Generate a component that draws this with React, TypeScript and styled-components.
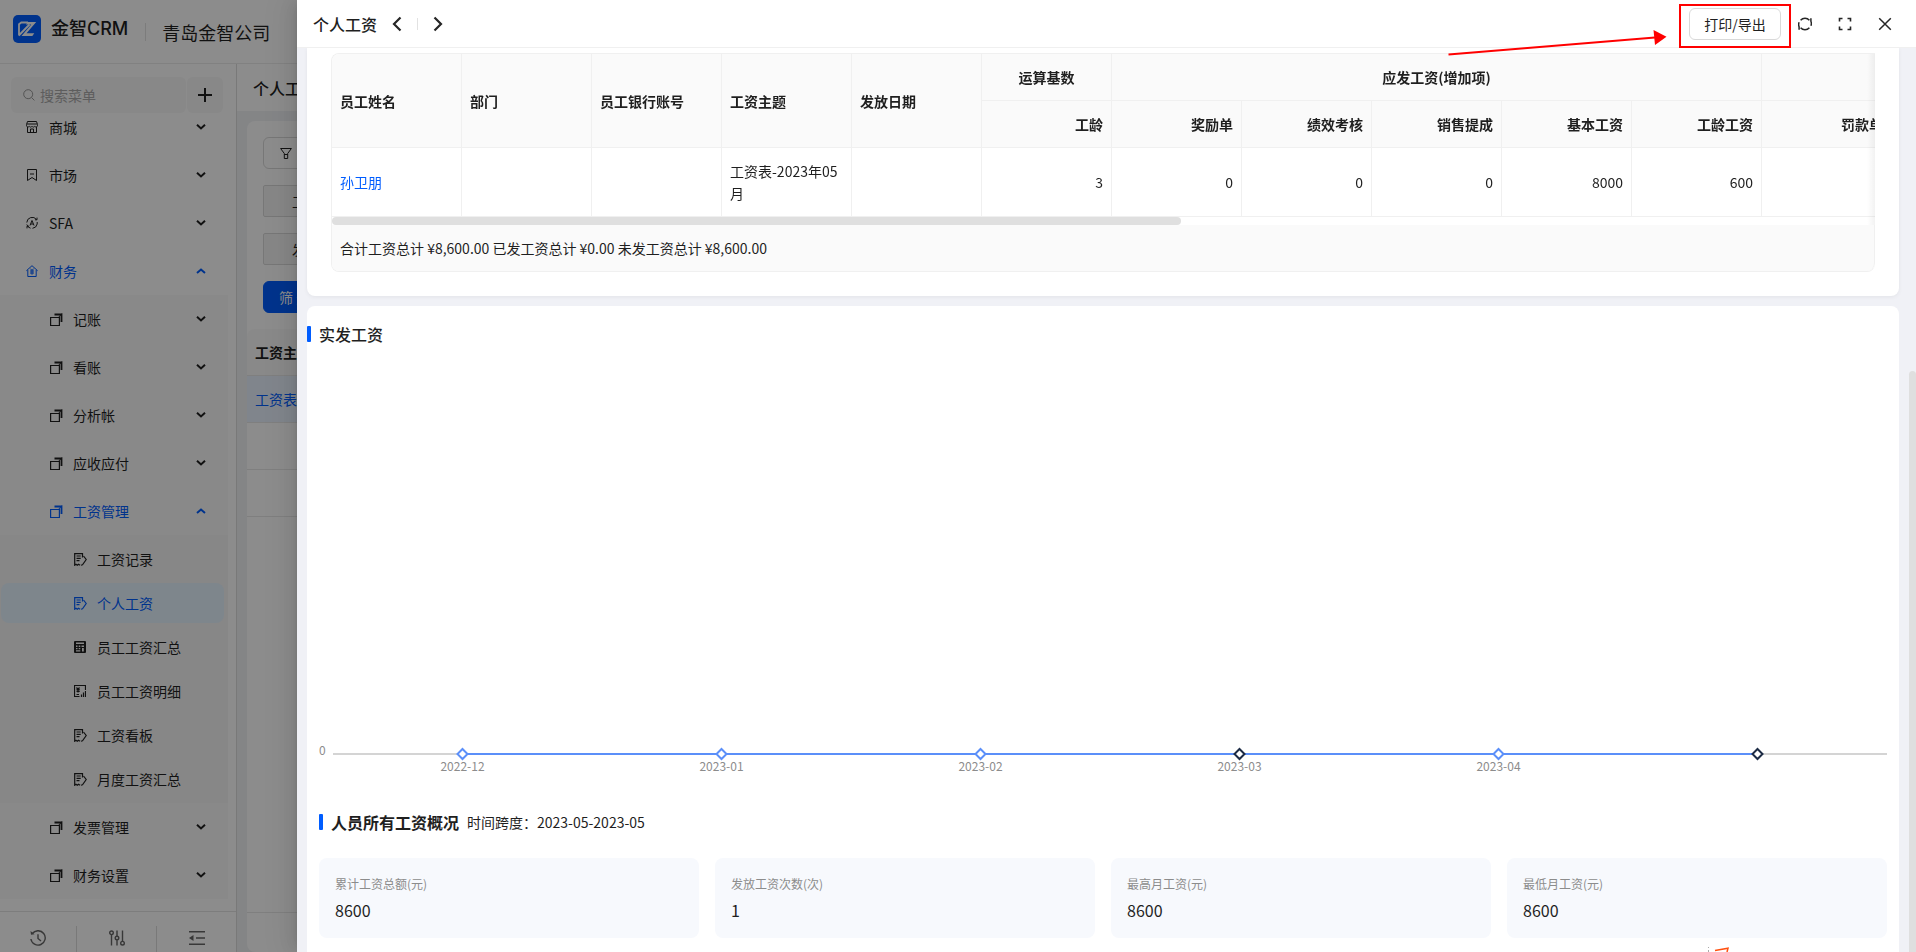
import React from 'react';
import styled, { createGlobalStyle, css } from 'styled-components';

const PRIMARY = '#005dff';
const LINE = '#f0f0f0';
const INK = '#1f1f1f';

const GlobalStyle = createGlobalStyle`
  *, *::before, *::after { box-sizing: border-box; }
  html, body, #root { height: 100%; }
  body {
    margin: 0;
    overflow: hidden;
    font-family: "Noto Sans CJK SC", "Liberation Sans", sans-serif;
    font-size: 14px;
    line-height: 22px;
    color: ${INK};
    background: #f0f2f5;
  }
  button, input { font: inherit; color: inherit; }
  button { cursor: pointer; }
  a { color: inherit; text-decoration: none; }
  h1, h2, ul, dl, dd, p { margin: 0; padding: 0; }
  ul { list-style: none; }
  svg { display: block; flex: none; }
`;

/* ---------- icons ---------- */

const Stroke = styled.svg.attrs({ fill: 'none', stroke: 'currentColor' })``;

const ShopIcon = () => (
  <Stroke width="12" height="12" viewBox="0 0 12 12">
    <path d="M1.5 .5h9l1 3v1.2a1.5 1.5 0 0 1-2.7 .6a1.6 1.6 0 0 1-2.8 0a1.6 1.6 0 0 1-2.8 0a1.5 1.5 0 0 1-2.7-.6V3.500zM1.500 6v5.500h9V6M4.500 11.500v-3.500h3v3.500M1 3h10" />
  </Stroke>
);
const MarketIcon = () => (
  <Stroke width="12" height="12" viewBox="0 0 12 12">
    <path d="M1.500 .5h9v11l-4.500-3l-4.500 3zM4 5h4" />
  </Stroke>
);
const SfaIcon = () => (
  <Stroke width="12" height="12" viewBox="0 0 12 12">
    <path d="M10.500 2.500A5.400 5.400 0 0 0 .8 5.500M.8 7.500a5.400 5.400 0 0 0 3.700 3.700M11.200 5v2a5.400 5.400 0 0 1-4.700 4.300M11 .6v2.200H9M1 11.400V9.200h2M4 8.500l2-5l2 5M4.800 7h2.400" />
  </Stroke>
);
const FinanceIcon = () => (
  <Stroke width="12" height="12" viewBox="0 0 12 12">
    <path d="M.4 5.700L6 .7l5.600 5M1.800 5v6.500h8.400V5M4.300 3.600L6 5.400l1.700-1.800M4 6h4M4 8h4M6 5.400v4.300" />
  </Stroke>
);
const StackIcon = () => (
  <Stroke width="13" height="13" viewBox="0 0 13 13">
    <path d="M.6 4.500h8.800v8H.6z" strokeWidth="1.200" />
    <path d="M4.500 1.500h7v7.500" strokeWidth="1.800" />
    <path d="M11.800 .5L8.500 4.500" strokeWidth="1" />
  </Stroke>
);
const NoteIcon = () => (
  <Stroke width="13" height="13" viewBox="0 0 13 13" strokeWidth="1.200">
    <path d="M8.500 4.500V.6H.7v11.600l1.300-.9l1.300 .9l1.300-.9l1.400 .9M2.500 3h4.200M2.500 5.300h4.200M2.500 7.600h3" />
    <path d="M9.500 3l2.700 3.500l-3.700 5.300l-1.600 .5" />
  </Stroke>
);
const CalcIcon = () => (
  <svg width="12" height="12" viewBox="0 0 12 12" fill="currentColor">
    <path fillRule="evenodd" d="M1 0h10a1 1 0 0 1 1 1v10a1 1 0 0 1-1 1H1a1 1 0 0 1-1-1V1a1 1 0 0 1 1-1zM2 1.500v1.500h8V1.500zM2 4.500V6h1.500V4.500zM4.700 4.500V6h1.600V4.500zM7.500 4.500V6H10V4.500zM2 7v1.300h1.500V7zM4.700 7v1.300h1.600V7zM2 9.300v1.200h4.300V9.300zM8 7v3.500h1.800V7z" />
  </svg>
);
const ReportIcon = () => (
  <Stroke width="12" height="12" viewBox="0 0 12 12" strokeWidth="1.200">
    <path d="M11.500 5V.5h-11v11h5M2.500 2.500L4 4.300l1.500-1.800M2.500 4.700h3.200M2.500 6.300h3.200M4 4.300v3.200M2.500 9.500h2.500M7.500 9.500v2.500M9.500 7.500V12M11.500 6v6" />
  </Stroke>
);
const Chevron = ({ up }: { up?: boolean }) => (
  <Stroke width="10" height="6" viewBox="0 0 10 6" strokeWidth="2">
    <path d={up ? 'M1 5l4-3.500L9 5' : 'M1 .8l4 3.700L9 .8'} />
  </Stroke>
);
const SearchIcon = () => (
  <Stroke width="12" height="12" viewBox="0 0 12 12">
    <circle cx="5.200" cy="5.200" r="4.500" />
    <path d="M8.500 8.500l2.900 2.900" />
  </Stroke>
);
const PlusIcon = () => (
  <Stroke width="14" height="14" viewBox="0 0 14 14" strokeWidth="2">
    <path d="M7 0v14M0 7h14" />
  </Stroke>
);
const FunnelIcon = () => (
  <Stroke width="12" height="12" viewBox="0 0 12 12">
    <path d="M.6 1.500h10.800L7.700 6.500v5H4.300v-5zM4.300 7.500h3.400" />
  </Stroke>
);
const HistoryIcon = () => (
  <Stroke width="16" height="16" viewBox="0 0 16 16" strokeWidth="1.400">
    <path d="M2.300 3.500A7.200 7.200 0 1 1 .9 9M8 4.200v4.300l3 2.500" />
    <path d="M.5 1l.5 3.800l3.600-.6z" fill="currentColor" stroke="none" />
  </Stroke>
);
const SlidersIcon = () => (
  <Stroke width="16" height="16" viewBox="0 0 16 16" strokeWidth="1.400">
    <path d="M2.500 5v10.500M8 .5V6M8 10v5.500M13.500 .5V11" />
    <circle cx="2.500" cy="2.800" r="1.800" />
    <circle cx="8" cy="8" r="1.800" />
    <circle cx="13.500" cy="13.200" r="1.800" />
  </Stroke>
);
const FoldIcon = () => (
  <Stroke width="16" height="16" viewBox="0 0 16 16" strokeWidth="1.600">
    <path d="M0 1.800h16M7 8h9M0 14.200h16" />
    <path d="M0 8l4.500-3v6z" fill="currentColor" stroke="none" />
  </Stroke>
);
const ArrowIcon = ({ next }: { next?: boolean }) => (
  <Stroke width="10" height="16" viewBox="0 0 10 16" strokeWidth="2.200">
    <path d={next ? 'M1.500 1.500L8 8l-6.500 6.500' : 'M8.500 1.500L2 8l6.500 6.500'} />
  </Stroke>
);
const RefreshIcon = () => (
  <Stroke width="14" height="14" viewBox="0 0 14 14" strokeWidth="1.500">
    <path d="M2.600 3.200A5.900 5.900 0 0 1 11.400 3.200M11.400 10.800A5.900 5.900 0 0 1 2.600 10.800" />
    <path d="M12.900 1.200V4.200A6 6 0 0 1 12.900 8.800M1.100 12.800V9.800A6 6 0 0 1 1.100 5.200" />
  </Stroke>
);
const FullscreenIcon = () => (
  <Stroke width="14" height="14" viewBox="0 0 14 14" strokeWidth="1.600">
    <path d="M1.500 4.500v-3h3M9.500 1.500h3v3M12.500 9.500v3h-3M4.500 12.500h-3v-3" />
  </Stroke>
);
const CloseIcon = () => (
  <Stroke width="14" height="14" viewBox="0 0 14 14" strokeWidth="1.500">
    <path d="M1.200 1.200l11.600 11.600M12.800 1.200L1.200 12.800" />
  </Stroke>
);
const Logo = () => (
  <svg width="28" height="28" viewBox="0 0 28 28">
    <rect width="28" height="28" rx="5" fill={PRIMARY} />
    <path d="M6 20.500V9.300L8.300 7.500H15M5.800 20.500L16.500 9.500" fill="none" stroke="#fff" strokeWidth="1.800" />
    <path d="M15 7h8.200L13.500 18.200h7.800l-2 2.800H8.500L18.300 9.500h-5.500z" fill="#fff" />
  </svg>
);

/* ---------- page behind the drawer ---------- */

const Page = styled.div`
  display: flex;
  flex-direction: column;
  height: 100vh;
`;
const TopBar = styled.header`
  display: flex;
  align-items: center;
  flex: none;
  height: 64px;
  padding-left: 13px;
  background: #fff;
  border-bottom: 1px solid #ececec;
`;
const LogoBox = styled.div`
  margin-bottom: 6px;
`;
const Brand = styled.strong`
  margin: 0 17px 6px 10px;
  font-family: Inter, "Noto Sans CJK SC", sans-serif;
  font-size: 18px;
  font-weight: 500;
  line-height: 28px;
`;
const BarDivider = styled.span<{ $h: number }>`
  width: 1px;
  height: ${(p) => p.$h}px;
  background: #e2e2e2;
`;
const Company = styled.span`
  margin-left: 16px;
  font-size: 18px;
  line-height: 28px;
`;
const Columns = styled.div`
  display: flex;
  flex: 1;
  min-height: 0;
`;

const Sidebar = styled.aside`
  display: flex;
  flex-direction: column;
  flex: none;
  width: 237px;
  background: #fff;
  border-right: 1px solid #dcdcdc;
`;
const SearchRow = styled.div`
  display: flex;
  flex: none;
  gap: 1px;
  padding: 13px 13px 0 11px;
`;
const SearchLabel = styled.label`
  display: flex;
  align-items: center;
  flex: 1;
  gap: 5px;
  min-width: 0;
  height: 36px;
  padding: 0 12px;
  background: #f7f7f7;
  border-radius: 6px;
  color: #999;
`;
const SearchInput = styled.input.attrs({ type: 'search' })`
  flex: 1;
  min-width: 0;
  padding: 0;
  border: 0;
  outline: 0;
  background: none;
  &::placeholder { color: #aaa; opacity: 1; }
`;
const AddButton = styled.button`
  display: grid;
  place-items: center;
  width: 36px;
  height: 36px;
  padding: 0;
  border: 0;
  border-radius: 6px;
  background: #f7f7f7;
`;
const MenuScroll = styled.nav`
  flex: 1;
  min-height: 0;
  padding-right: 8px;
  overflow: hidden;
`;
const MenuList = styled.ul<{ $scrolled?: boolean; $shade?: string }>`
  margin-top: ${(p) => (p.$scrolled ? '-10px' : '0')};
  background: ${(p) => p.$shade ?? 'transparent'};
`;
const LeafList = styled(MenuList)`
  padding: 4px 4px 4px 1px;
  display: flex;
  flex-direction: column;
  gap: 4px;
`;
const MenuRow = styled.button<{ $level: number; $open?: boolean }>`
  display: flex;
  align-items: center;
  width: 100%;
  height: 48px;
  padding: 0 22px 0 ${(p) => 2 + p.$level * 24}px;
  gap: 10px;
  border: 0;
  background: none;
  text-align: left;
  color: ${(p) => (p.$open ? PRIMARY : INK)};
`;
const IconSlot = styled.span`
  display: flex;
  width: 13px;
`;
const RowLabel = styled.span`
  flex: 1;
`;
const Leaf = styled.a<{ $active?: boolean }>`
  display: flex;
  align-items: center;
  gap: 10px;
  height: 40px;
  padding-left: 73px;
  border-radius: 8px;
  ${(p) => p.$active && css`
    color: ${PRIMARY};
    background: #e6f4ff;
  `}
`;
const SideFooter = styled.div`
  display: grid;
  grid-template-columns: 76px 1fr 1fr;
  flex: none;
  height: 41px;
  border-top: 1px solid #e4e4e4;
`;
const FooterButton = styled.button`
  display: flex;
  justify-content: center;
  margin-top: 14px;
  padding: 4px 0 0;
  border: 0;
  background: none;
  color: #666;
  & + & { border-left: 1px solid #dcdcdc; }
`;

const Main = styled.main`
  display: flex;
  flex-direction: column;
  flex: 1;
  min-width: 0;
`;
const PageTitle = styled.h1`
  flex: none;
  height: 47px;
  padding: 12px 16px;
  background: #fff;
  font-size: 16px;
  font-weight: 500;
  line-height: 24px;
`;
const ListCard = styled.section`
  display: flex;
  flex-direction: column;
  flex: 1;
  margin: 10px 10px 0;
  background: #fff;
  border-radius: 8px;
`;
const Filters = styled.div`
  display: flex;
  flex-direction: column;
  align-items: flex-start;
  gap: 16px;
  padding: 16px;
`;
const FilterButton = styled.button<{ $kind: 'outline' | 'field' | 'primary' }>`
  height: 32px;
  border: 1px solid #d9d9d9;
  background: #fff;
  border-radius: 6px;
  padding: 0 16px;
  ${(p) => p.$kind === 'field' && css`
    padding: 0 28px;
    border-radius: 2px;
    background: #f5f5f5;
  `}
  ${(p) => p.$kind === 'primary' && css`
    padding: 0 15px;
    color: #fff;
    border-color: ${PRIMARY};
    background: ${PRIMARY};
  `}
`;
const ListTable = styled.table`
  width: 100%;
  border-collapse: separate;
  border-spacing: 0;
  th, td {
    height: 47px;
    padding: 0 8px;
    text-align: left;
    border-bottom: 1px solid #e8e8e8;
  }
  th { background: #fafafa; font-weight: 600; border-radius: 8px 0 0 0; }
`;
const PickedRow = styled.tr`
  background: #eaf3ff;
  color: ${PRIMARY};
`;
const ListFooter = styled.div`
  height: 40px;
  margin-top: auto;
  border-top: 1px solid #e8e8e8;
`;

const Mask = styled.div`
  position: fixed;
  inset: 0;
  background: rgba(0, 0, 0, 0.45);
`;

/* ---------- drawer ---------- */

const Drawer = styled.section`
  position: fixed;
  inset: 0 0 0 297px;
  display: flex;
  flex-direction: column;
  background: #f0f1f6;
  box-shadow: -6px 0 16px rgba(0, 0, 0, 0.08), -3px 0 6px -4px rgba(0, 0, 0, 0.12),
    -9px 0 28px 8px rgba(0, 0, 0, 0.05);
`;
const DrawerHead = styled.header`
  position: relative;
  z-index: 1;
  display: flex;
  align-items: center;
  flex: none;
  gap: 8px;
  height: 48px;
  padding: 0 15px 0 16px;
  background: #fff;
  border-bottom: 1px solid ${LINE};
`;
const DrawerTitle = styled.h2`
  font-size: 16px;
  font-weight: 500;
  line-height: 24px;
`;
const Pager = styled.div`
  display: flex;
  align-items: center;
  flex: 1;
  gap: 4px;
  margin-left: -4px;
`;
const IconButton = styled.button`
  display: grid;
  place-items: center;
  width: 32px;
  height: 32px;
  padding: 0;
  border: 0;
  background: none;
  color: #262626;
`;
const ExportWrap = styled.div`
  position: relative;
  &::after {
    content: '';
    position: absolute;
    inset: -4px -10px -8px -10px;
    border: 2px solid #f00;
    pointer-events: none;
  }
`;
const ExportButton = styled.button`
  height: 32px;
  width: 92px;
  padding: 0;
  background: #fff;
  border: 1px solid #d9d9d9;
  border-radius: 6px;
`;
const Pointer = styled.svg`
  position: absolute;
  right: calc(100% + 22px);
  top: 21px;
`;

const DrawerBody = styled.div`
  display: flex;
  flex: 1;
  min-height: 0;
`;
const Cards = styled.div`
  display: flex;
  flex-direction: column;
  flex: 1;
  gap: 10px;
  min-width: 0;
  padding: 0 10px;
  overflow: hidden;
`;
const Rail = styled.div`
  width: 7px;
  padding-top: 323px;
  display: flex;
`;
const RailThumb = styled.span`
  flex: 1;
  border-radius: 6px 6px 0 0;
  background: #dfdfdf;
`;
const TableCard = styled.section`
  padding: 5px 24px 24px;
  background: #fff;
  border-radius: 0 0 8px 8px;
  box-shadow: 0 1px 4px rgba(0, 0, 0, 0.06);
`;
const TableFrame = styled.div`
  border: 1px solid ${LINE};
  border-right: 0;
  border-radius: 8px 0 8px 8px;
  overflow: hidden;
`;
const TableView = styled.div`
  position: relative;
  overflow: hidden;
  &::after {
    content: '';
    position: absolute;
    inset: 0 0 0 auto;
    width: 8px;
    background: linear-gradient(to right, transparent, rgba(5, 5, 5, 0.05));
  }
`;
const PayTable = styled.table`
  width: 1560px;
  table-layout: fixed;
  border-collapse: separate;
  border-spacing: 0;
`;
const Th = styled.th<{ $align?: string }>`
  height: 47px;
  padding: 12px 8px;
  font-weight: 600;
  text-align: ${(p) => p.$align ?? 'left'};
  background: #fafafa;
  border-right: 1px solid ${LINE};
  border-bottom: 1px solid ${LINE};
`;
const Td = styled.td<{ $num?: boolean }>`
  height: 69px;
  padding: 12px 8px;
  text-align: ${(p) => (p.$num ? 'right' : 'left')};
  border-right: 1px solid ${LINE};
  border-bottom: 1px solid ${LINE};
`;
const NameLink = styled.a`
  color: ${PRIMARY};
`;
const HScroll = styled.div`
  height: 8px;
  background: #fff;
`;
const HThumb = styled.div`
  width: 55%;
  height: 8px;
  border-radius: 4px;
  background: #dfdfdf;
`;
const Totals = styled.p`
  padding: 12px 8px;
  background: #fafafa;
  border-right: 1px solid ${LINE};
  border-radius: 0 0 8px 0;
`;

const StatCard = styled.section`
  flex: 1;
  padding-top: 16px;
  background: #fff;
  border-radius: 8px 8px 0 0;
`;
const SectionHead = styled.div`
  display: flex;
  align-items: center;
  gap: 8px;
  height: 24px;
  &::before {
    content: '';
    width: 4px;
    height: 16px;
    border-radius: 1px;
    background: ${PRIMARY};
  }
`;
const SectionTitle = styled.h2<{ $strong?: boolean }>`
  font-size: 16px;
  font-weight: ${(p) => (p.$strong ? 600 : 500)};
  line-height: 24px;
`;
const Inset = styled.div`
  padding: 0 12px;
`;
const Chart = styled.div`
  display: grid;
  grid-template-columns: 14px 1fr;
  align-items: end;
  margin-bottom: 36px;
  font-size: 12px;
  line-height: 16px;
  color: #8c8c8c;
`;
const Plot = styled.svg`
  width: 100%;
  height: 412px;
  overflow: visible;
`;
const Months = styled.div`
  grid-column: 2;
  display: grid;
  grid-template-columns: repeat(6, 1fr);
  text-align: center;
`;
const Stats = styled.dl`
  display: grid;
  grid-template-columns: repeat(4, 1fr);
  gap: 16px;
  margin-top: 24px;
`;
const Stat = styled.div`
  display: flex;
  flex-direction: column;
  gap: 4px;
  padding: 16px;
  border-radius: 8px;
  background: #f7f9fd;
`;
const StatName = styled.dt`
  font-size: 12px;
  line-height: 20px;
  color: #8c8c8c;
`;
const StatValue = styled.dd`
  font-size: 16px;
  line-height: 24px;
`;
const Helper = styled.svg`
  position: fixed;
  right: 184px;
  bottom: 0;
`;

/* ---------- data ---------- */

const topMenus = [
  { label: '商城', icon: <ShopIcon /> },
  { label: '市场', icon: <MarketIcon /> },
  { label: 'SFA', icon: <SfaIcon /> },
];
const ledgers = ['记账', '看账', '分析帐', '应收应付'];
const leaves = [
  { label: '工资记录', icon: <NoteIcon /> },
  { label: '个人工资', icon: <NoteIcon />, active: true },
  { label: '员工工资汇总', icon: <CalcIcon /> },
  { label: '员工工资明细', icon: <ReportIcon /> },
  { label: '工资看板', icon: <NoteIcon /> },
  { label: '月度工资汇总', icon: <NoteIcon /> },
];
const infoColumns = ['员工姓名', '部门', '员工银行账号', '工资主题', '发放日期'];
const payColumns = [
  { label: '工龄', value: '3' },
  { label: '奖励单', value: '0' },
  { label: '绩效考核', value: '0' },
  { label: '销售提成', value: '0' },
  { label: '基本工资', value: '8000' },
  { label: '工龄工资', value: '600' },
  { label: '罚款单', value: '' },
];
const months = ['2022-12', '2023-01', '2023-02', '2023-03', '2023-04', ''];
const darkPoints = [3, 5];
const stats = [
  ['累计工资总额(元)', '8600'],
  ['发放工资次数(次)', '1'],
  ['最高月工资(元)', '8600'],
  ['最低月工资(元)', '8600'],
];

const Item = ({ label, icon, level, open }: { label: string; icon: React.ReactNode; level: number; open?: boolean }) => (
  <MenuRow type="button" $level={level} $open={open} aria-expanded={!!open}>
    <IconSlot>{icon}</IconSlot>
    <RowLabel>{label}</RowLabel>
    <Chevron up={open} />
  </MenuRow>
);

const pointX = (i: number) => `${((i + 0.5) / months.length) * 100}%`;

const SideMenu = () => (
  <MenuScroll>
    <MenuList $scrolled>
      {topMenus.map((m) => (
        <li key={m.label}><Item {...m} level={1} /></li>
      ))}
      <li>
        <Item label="财务" icon={<FinanceIcon />} level={1} open />
        <MenuList $shade="#fafafa">
          {ledgers.map((l) => (
            <li key={l}><Item label={l} icon={<StackIcon />} level={2} /></li>
          ))}
          <li>
            <Item label="工资管理" icon={<StackIcon />} level={2} open />
            <LeafList $shade="#f6f6f6">
              {leaves.map((l) => (
                <li key={l.label}>
                  <Leaf href="#" $active={l.active}>
                    <IconSlot>{l.icon}</IconSlot>
                    {l.label}
                  </Leaf>
                </li>
              ))}
            </LeafList>
          </li>
          <li><Item label="发票管理" icon={<StackIcon />} level={2} /></li>
          <li><Item label="财务设置" icon={<StackIcon />} level={2} /></li>
        </MenuList>
      </li>
    </MenuList>
  </MenuScroll>
);

const TrendChart = () => (
  <Chart>
    <span>0</span>
    <Plot>
      <line x1="0" x2="100%" y1="408" y2="408" stroke="#d4d4d4" strokeWidth="2" />
      <line x1={pointX(0)} x2={pointX(5)} y1="408" y2="408" stroke="#5b8ff9" strokeWidth="2" />
      {months.map((m, i) => (
        <svg key={i} x={pointX(i)} y="408" overflow="visible">
          <path
            d="M0-5L5 0L0 5L-5 0z"
            fill="#fff"
            stroke={darkPoints.includes(i) ? '#1c2b45' : '#5b8ff9'}
            strokeWidth="2"
          />
        </svg>
      ))}
    </Plot>
    <Months>
      {months.map((m, i) => <span key={i}>{m}</span>)}
    </Months>
  </Chart>
);

export default function App() {
  return (
    <>
      <GlobalStyle />
      <Page>
        <TopBar>
          <LogoBox><Logo /></LogoBox>
          <Brand>金智CRM</Brand>
          <BarDivider $h={18} />
          <Company>青岛金智公司</Company>
        </TopBar>
        <Columns>
          <Sidebar>
            <SearchRow>
              <SearchLabel>
                <SearchIcon />
                <SearchInput placeholder="搜索菜单" aria-label="搜索菜单" />
              </SearchLabel>
              <AddButton type="button" aria-label="添加"><PlusIcon /></AddButton>
            </SearchRow>
            <SideMenu />
            <SideFooter>
              <FooterButton type="button" aria-label="历史"><HistoryIcon /></FooterButton>
              <FooterButton type="button" aria-label="设置"><SlidersIcon /></FooterButton>
              <FooterButton type="button" aria-label="收起"><FoldIcon /></FooterButton>
            </SideFooter>
          </Sidebar>
          <Main>
            <PageTitle>个人工资</PageTitle>
            <ListCard>
              <Filters>
                <FilterButton type="button" $kind="outline" aria-label="过滤"><FunnelIcon /></FilterButton>
                <FilterButton type="button" $kind="field">工资主题</FilterButton>
                <FilterButton type="button" $kind="field">发放日期</FilterButton>
                <FilterButton type="button" $kind="primary">筛 选</FilterButton>
              </Filters>
              <ListTable>
                <thead><tr><th>工资主题</th></tr></thead>
                <tbody>
                  <PickedRow><td>工资表-2023年05月</td></PickedRow>
                  <tr><td /></tr>
                  <tr><td /></tr>
                </tbody>
              </ListTable>
              <ListFooter />
            </ListCard>
          </Main>
        </Columns>
      </Page>
      <Mask />

      <Drawer role="dialog" aria-label="个人工资">
        <DrawerHead>
          <DrawerTitle>个人工资</DrawerTitle>
          <Pager>
            <IconButton type="button" aria-label="上一条"><ArrowIcon /></IconButton>
            <BarDivider $h={12} />
            <IconButton type="button" aria-label="下一条"><ArrowIcon next /></IconButton>
          </Pager>
          <ExportWrap>
            <ExportButton type="button">打印/导出</ExportButton>
            <Pointer width="220" height="28" viewBox="0 0 220 28" aria-hidden="true">
              <path d="M1.500 25.500L208 8.500" stroke="#f00" strokeWidth="2" />
              <path d="M206.500 1L219.500 7.700L208 16z" fill="#f00" />
            </Pointer>
          </ExportWrap>
          <IconButton type="button" aria-label="刷新"><RefreshIcon /></IconButton>
          <IconButton type="button" aria-label="全屏"><FullscreenIcon /></IconButton>
          <IconButton type="button" aria-label="关闭"><CloseIcon /></IconButton>
        </DrawerHead>
        <DrawerBody>
          <Cards>
            <TableCard>
              <TableFrame>
                <TableView>
                  <PayTable>
                    <thead>
                      <tr>
                        {infoColumns.map((c) => <Th key={c} rowSpan={2}>{c}</Th>)}
                        <Th $align="center">运算基数</Th>
                        <Th $align="center" colSpan={5}>应发工资(增加项)</Th>
                        <Th />
                      </tr>
                      <tr>
                        {payColumns.map((c) => <Th key={c.label} $align="right">{c.label}</Th>)}
                      </tr>
                    </thead>
                    <tbody>
                      <tr>
                        <Td><NameLink href="#">孙卫朋</NameLink></Td>
                        <Td />
                        <Td />
                        <Td>工资表-2023年05月</Td>
                        <Td />
                        {payColumns.map((c) => <Td key={c.label} $num>{c.value}</Td>)}
                      </tr>
                    </tbody>
                  </PayTable>
                  <HScroll><HThumb /></HScroll>
                </TableView>
                <Totals>合计工资总计 ¥8,600.00 已发工资总计 ¥0.00 未发工资总计 ¥8,600.00</Totals>
              </TableFrame>
            </TableCard>

            <StatCard>
              <SectionHead><SectionTitle>实发工资</SectionTitle></SectionHead>
              <Inset>
                <TrendChart />
                <SectionHead>
                  <SectionTitle $strong>人员所有工资概况</SectionTitle>
                  <span>时间跨度：2023-05-2023-05</span>
                </SectionHead>
                <Stats>
                  {stats.map(([name, value]) => (
                    <Stat key={name}>
                      <StatName>{name}</StatName>
                      <StatValue>{value}</StatValue>
                    </Stat>
                  ))}
                </Stats>
              </Inset>
            </StatCard>
          </Cards>
          <Rail><RailThumb /></Rail>
        </DrawerBody>
        <Helper width="26" height="6" viewBox="0 0 26 6" aria-hidden="true">
          <path d="M2 1h1v1H2zM2 4h1v2H2z" fill="#aaa" />
          <path d="M9 4.500L22 2.200l-1 3.800" fill="none" stroke="#ff5010" strokeWidth="1.500" />
        </Helper>
      </Drawer>
    </>
  );
}
